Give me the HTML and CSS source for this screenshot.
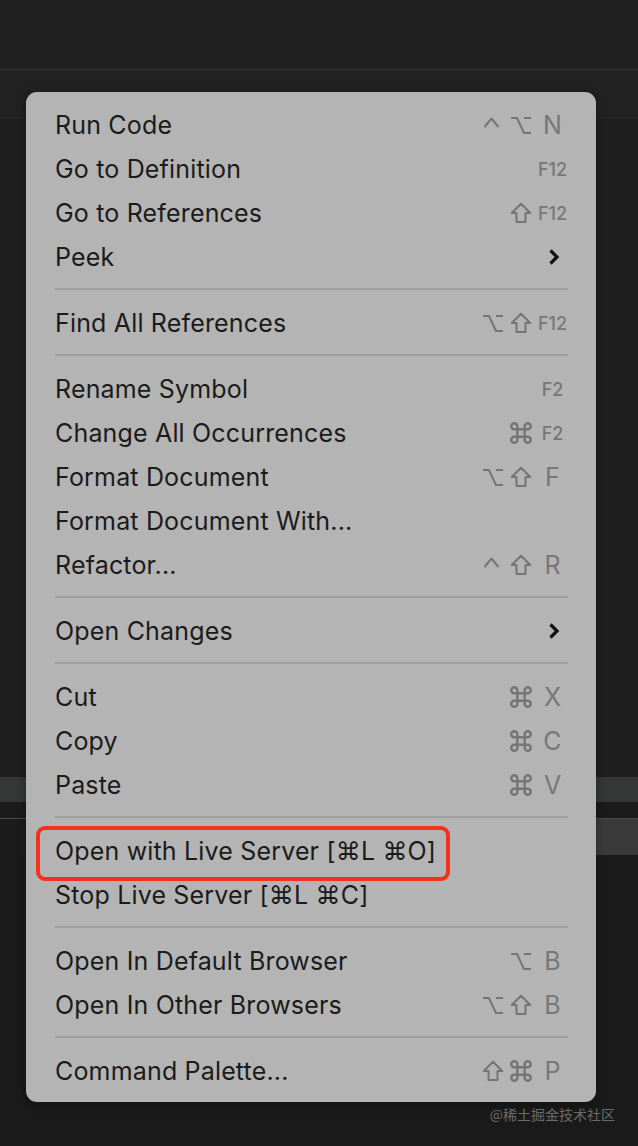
FILE: index.html
```html
<!DOCTYPE html>
<html>
<head>
<meta charset="utf-8">
<link rel="stylesheet" href="styles.css">
</head>
<body>
<div class="bg">
  <div class="band top"></div>
  <div class="hline"></div>
  <div class="band mid"></div>
  <div class="hline faint"></div>
  <div class="band body"></div>
  <div class="strip"></div>
  <div class="band gap"></div>
  <div class="panel"></div>
  <div class="band rest"></div>
</div>

<div class="menu">
  <div class="row"><span class="label">Run Code</span>
    <span class="mods">
      <svg class="m" viewBox="0 0 22 22"><polyline points="2.5,13 9.5,4.5 16.5,13"/></svg>
      <svg class="m" viewBox="0 0 22 22"><path d="M1 4H7L14 19H21M14 4H21"/></svg>
    </span><span class="key">N</span></div>
  <div class="row"><span class="label">Go to Definition</span><span class="mods"></span><span class="key fk">F12</span></div>
  <div class="row"><span class="label">Go to References</span>
    <span class="mods">
      <svg class="m" viewBox="0 0 22 22"><path d="M11 1.8L20.3 11H15.5V20H6.5V11H1.7Z"/></svg>
    </span><span class="key fk">F12</span></div>
  <div class="row"><span class="label">Peek</span><span class="mods"></span><span class="key"><svg class="chev" viewBox="0 0 12 18"><polyline points="2.5,2.5 9,9 2.5,15.5"/></svg></span></div>
  <div class="sep"></div>
  <div class="row"><span class="label">Find All References</span>
    <span class="mods">
      <svg class="m" viewBox="0 0 22 22"><path d="M1 4H7L14 19H21M14 4H21"/></svg>
      <svg class="m" viewBox="0 0 22 22"><path d="M11 1.8L20.3 11H15.5V20H6.5V11H1.7Z"/></svg>
    </span><span class="key fk">F12</span></div>
  <div class="sep"></div>
  <div class="row"><span class="label">Rename Symbol</span><span class="mods"></span><span class="key fk">F2</span></div>
  <div class="row"><span class="label">Change All Occurrences</span>
    <span class="mods">
      <svg class="m" viewBox="2 2 18 18"><path d="M8 8h6v6H8zM8 8V5.5A2.5 2.5 0 1 0 5.5 8H8zM14 8V5.5a2.5 2.5 0 1 1 2.5 2.5H14zM8 14v2.5A2.5 2.5 0 1 1 5.5 14H8zM14 14v2.5a2.5 2.5 0 1 0 2.5-2.5H14z"/></svg>
    </span><span class="key fk">F2</span></div>
  <div class="row"><span class="label">Format Document</span>
    <span class="mods">
      <svg class="m" viewBox="0 0 22 22"><path d="M1 4H7L14 19H21M14 4H21"/></svg>
      <svg class="m" viewBox="0 0 22 22"><path d="M11 1.8L20.3 11H15.5V20H6.5V11H1.7Z"/></svg>
    </span><span class="key">F</span></div>
  <div class="row"><span class="label">Format Document With...</span><span class="mods"></span><span class="key"></span></div>
  <div class="row"><span class="label">Refactor...</span>
    <span class="mods">
      <svg class="m" viewBox="0 0 22 22"><polyline points="2.5,13 9.5,4.5 16.5,13"/></svg>
      <svg class="m" viewBox="0 0 22 22"><path d="M11 1.8L20.3 11H15.5V20H6.5V11H1.7Z"/></svg>
    </span><span class="key">R</span></div>
  <div class="sep"></div>
  <div class="row"><span class="label">Open Changes</span><span class="mods"></span><span class="key"><svg class="chev" viewBox="0 0 12 18"><polyline points="2.5,2.5 9,9 2.5,15.5"/></svg></span></div>
  <div class="sep"></div>
  <div class="row"><span class="label">Cut</span>
    <span class="mods">
      <svg class="m" viewBox="2 2 18 18"><path d="M8 8h6v6H8zM8 8V5.5A2.5 2.5 0 1 0 5.5 8H8zM14 8V5.5a2.5 2.5 0 1 1 2.5 2.5H14zM8 14v2.5A2.5 2.5 0 1 1 5.5 14H8zM14 14v2.5a2.5 2.5 0 1 0 2.5-2.5H14z"/></svg>
    </span><span class="key">X</span></div>
  <div class="row"><span class="label">Copy</span>
    <span class="mods">
      <svg class="m" viewBox="2 2 18 18"><path d="M8 8h6v6H8zM8 8V5.5A2.5 2.5 0 1 0 5.5 8H8zM14 8V5.5a2.5 2.5 0 1 1 2.5 2.5H14zM8 14v2.5A2.5 2.5 0 1 1 5.5 14H8zM14 14v2.5a2.5 2.5 0 1 0 2.5-2.5H14z"/></svg>
    </span><span class="key">C</span></div>
  <div class="row"><span class="label">Paste</span>
    <span class="mods">
      <svg class="m" viewBox="2 2 18 18"><path d="M8 8h6v6H8zM8 8V5.5A2.5 2.5 0 1 0 5.5 8H8zM14 8V5.5a2.5 2.5 0 1 1 2.5 2.5H14zM8 14v2.5A2.5 2.5 0 1 1 5.5 14H8zM14 14v2.5a2.5 2.5 0 1 0 2.5-2.5H14z"/></svg>
    </span><span class="key">V</span></div>
  <div class="sep"></div>
  <div class="row"><span class="label marked">Open with Live Server [⌘L ⌘O]</span><span class="mods"></span><span class="key"></span></div>
  <div class="row"><span class="label">Stop Live Server [⌘L ⌘C]</span><span class="mods"></span><span class="key"></span></div>
  <div class="sep"></div>
  <div class="row"><span class="label">Open In Default Browser</span>
    <span class="mods">
      <svg class="m" viewBox="0 0 22 22"><path d="M1 4H7L14 19H21M14 4H21"/></svg>
    </span><span class="key">B</span></div>
  <div class="row"><span class="label">Open In Other Browsers</span>
    <span class="mods">
      <svg class="m" viewBox="0 0 22 22"><path d="M1 4H7L14 19H21M14 4H21"/></svg>
      <svg class="m" viewBox="0 0 22 22"><path d="M11 1.8L20.3 11H15.5V20H6.5V11H1.7Z"/></svg>
    </span><span class="key">B</span></div>
  <div class="sep"></div>
  <div class="row"><span class="label">Command Palette...</span>
    <span class="mods">
      <svg class="m" viewBox="0 0 22 22"><path d="M11 1.8L20.3 11H15.5V20H6.5V11H1.7Z"/></svg>
      <svg class="m" viewBox="2 2 18 18"><path d="M8 8h6v6H8zM8 8V5.5A2.5 2.5 0 1 0 5.5 8H8zM14 8V5.5a2.5 2.5 0 1 1 2.5 2.5H14zM8 14v2.5A2.5 2.5 0 1 1 5.5 14H8zM14 14v2.5a2.5 2.5 0 1 0 2.5-2.5H14z"/></svg>
    </span><span class="key">P</span></div>
</div>

<div class="watermark">@稀土掘金技术社区</div>
</body>
</html>
```

FILE: styles.css
```css
* { box-sizing: border-box; }
html, body { margin: 0; padding: 0; }
body {
  width: 638px;
  height: 1146px;
  overflow: hidden;
  position: relative;
  background: #1a1a1a;
  font-family: Inter, "DejaVu Sans", sans-serif;
}
.bg { display: flex; flex-direction: column; height: 1146px; }
.band.top { height: 68px; background: #202020; }
.hline { height: 3px; background: #2a2a2a; }
.hline.faint { height: 2px; background: #262626; }
.band.mid { height: 46px; background: #212121; }
.band.body { height: 658px; background: #1f1f1f; }
.strip { height: 25px; background: #353737; }
.band.gap { height: 16px; background: #1b1b1b; }
.panel {
  height: 37px;
  background: linear-gradient(to right, #1b1b1b 0, #1b1b1b 560px, #3a3a3a 560px);
  border-top: 1px solid #4a4a4a;
}
.band.rest { flex: 1; background: #1a1a1a; }

.menu {
  position: absolute;
  left: 26px;
  top: 92px;
  width: 570px;
  padding: 11px 0 9px;
  background: #b4b4b4;
  border-radius: 11px;
  box-shadow: 0 2px 10px rgba(0,0,0,0.35);
}
.row {
  display: flex;
  align-items: center;
  height: 44px;
  padding: 0 28px 0 29px;
  color: #1b1b1b;
  font-size: 25px;
}
.label { flex: 1; white-space: nowrap; line-height: 44px; letter-spacing: 0.17px; }
.mods { display: flex; gap: 6px; margin-right: 5px; }
.m {
  width: 22px;
  height: 22px;
  fill: none;
  stroke: #757575;
  stroke-width: 2;
  stroke-linejoin: round;
  stroke-linecap: butt;
}
.key {
  width: 31px;
  text-align: center;
  color: #777777;
  font-size: 25px;
  display: flex;
  justify-content: center;
  align-items: center;
}
.key.fk { font-size: 18px; font-weight: 500; }
.chev {
  width: 12px;
  height: 18px;
  fill: none;
  stroke: #111;
  stroke-width: 3.2;
  margin-left: 3px;
}
.sep {
  height: 22px;
  margin: 0 28px 0 29px;
  padding-top: 9px;
}
.sep::before {
  content: "";
  display: block;
  height: 2px;
  background: #9e9e9e;
}
.marked { position: relative; flex: 0 0 auto; margin-right: auto; }
.marked::after {
  content: "";
  position: absolute;
  left: -19px;
  right: -14px;
  top: -3px;
  bottom: -8px;
  border: 4px solid #f2321c;
  border-radius: 9px;
}
.watermark {
  position: absolute;
  right: 23px;
  top: 1104px;
  font-family: "Noto Sans CJK SC", sans-serif;
  font-size: 14px;
  line-height: 20px;
  color: #6a6a6a;
}
```
